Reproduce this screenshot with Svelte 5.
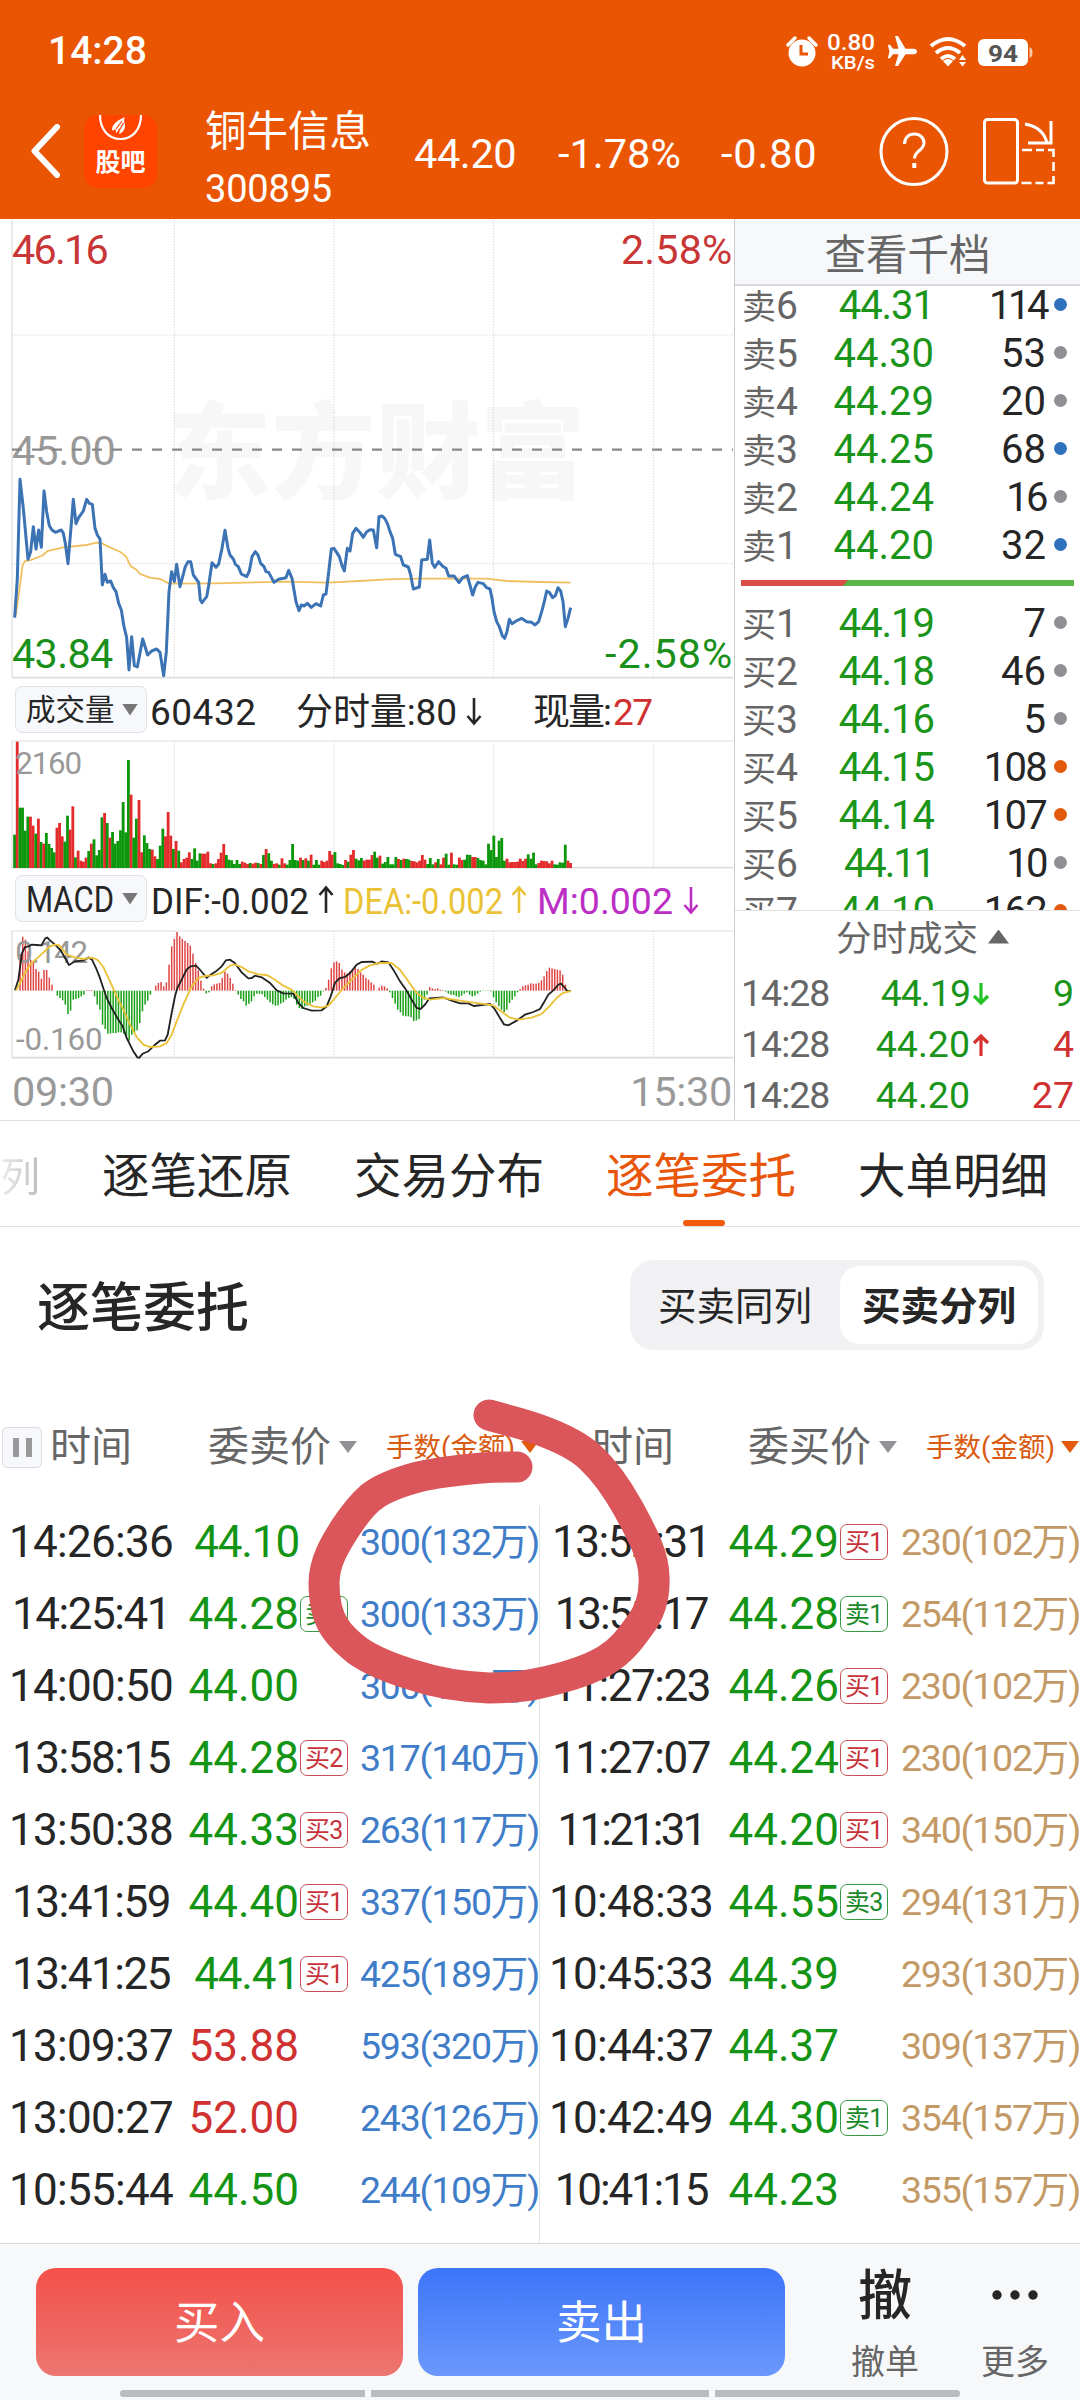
<script lang="ts">
  type Level = { n: number; price: string; vol: number; dot: 'blue' | 'grey' | 'orange' };
  type Order = { time: string; price: string; up?: boolean; tag?: string; amount: string };

  const asks: Level[] = [
    { n: 6, price: '44.31', vol: 114, dot: 'blue' },
    { n: 5, price: '44.30', vol: 53, dot: 'grey' },
    { n: 4, price: '44.29', vol: 20, dot: 'grey' },
    { n: 3, price: '44.25', vol: 68, dot: 'blue' },
    { n: 2, price: '44.24', vol: 16, dot: 'grey' },
    { n: 1, price: '44.20', vol: 32, dot: 'blue' },
  ];

  const bids: Level[] = [
    { n: 1, price: '44.19', vol: 7, dot: 'grey' },
    { n: 2, price: '44.18', vol: 46, dot: 'grey' },
    { n: 3, price: '44.16', vol: 5, dot: 'grey' },
    { n: 4, price: '44.15', vol: 108, dot: 'orange' },
    { n: 5, price: '44.14', vol: 107, dot: 'orange' },
    { n: 6, price: '44.11', vol: 10, dot: 'grey' },
    { n: 7, price: '44.10', vol: 162, dot: 'orange' },
  ];

  const ticks = [
    { time: '14:28', price: '44.19', dir: 'down', vol: 9, buy: false },
    { time: '14:28', price: '44.20', dir: 'up', vol: 4, buy: true },
    { time: '14:28', price: '44.20', dir: '', vol: 27, buy: true },
  ];

  const tabs = ['逐笔还原', '交易分布', '逐笔委托', '大单明细'];
  let activeTab = '逐笔委托';

  const sells: Order[] = [
    { time: '14:26:36', price: '44.10', amount: '300(132万)' },
    { time: '14:25:41', price: '44.28', tag: '卖1', amount: '300(133万)' },
    { time: '14:00:50', price: '44.00', amount: '300(132万)' },
    { time: '13:58:15', price: '44.28', tag: '买2', amount: '317(140万)' },
    { time: '13:50:38', price: '44.33', tag: '买3', amount: '263(117万)' },
    { time: '13:41:59', price: '44.40', tag: '买1', amount: '337(150万)' },
    { time: '13:41:25', price: '44.41', tag: '买1', amount: '425(189万)' },
    { time: '13:09:37', price: '53.88', up: true, amount: '593(320万)' },
    { time: '13:00:27', price: '52.00', up: true, amount: '243(126万)' },
    { time: '10:55:44', price: '44.50', amount: '244(109万)' },
  ];

  const buys: Order[] = [
    { time: '13:52:31', price: '44.29', tag: '买1', amount: '230(102万)' },
    { time: '13:51:17', price: '44.28', tag: '卖1', amount: '254(112万)' },
    { time: '11:27:23', price: '44.26', tag: '买1', amount: '230(102万)' },
    { time: '11:27:07', price: '44.24', tag: '买1', amount: '230(102万)' },
    { time: '11:21:31', price: '44.20', tag: '买1', amount: '340(150万)' },
    { time: '10:48:33', price: '44.55', tag: '卖3', amount: '294(131万)' },
    { time: '10:45:33', price: '44.39', amount: '293(130万)' },
    { time: '10:44:37', price: '44.37', amount: '309(137万)' },
    { time: '10:42:49', price: '44.30', tag: '卖1', amount: '354(157万)' },
    { time: '10:41:15', price: '44.23', amount: '355(157万)' },
  ];

  const sides = [
    { key: 'sell', label: '委卖价', orders: sells },
    { key: 'buy', label: '委买价', orders: buys },
  ];

  // Roboto figures are tabular, pull numbers with narrow 1s together
  function tighten(value: string | number): string {
    const s = String(value);
    const ones = s.split('1').length - 1;
    return `${((-0.13 * ones) / s.length).toFixed(3)}em`;
  }

  // charts are drawn in 1/3 px units, one minute is STEP wide
  const STEP = 7.98;
  const gridX = [523, 1002, 1480, 1960];

  const priceLine =
    '44,1208 52,1090 60,793 70,880 84,1033 92,1010 100,935 108,1002 116,945 124,997 132,828 140,890 148,932 156,945 166,952 184,945 190,955 196,985 204,1046 220,853 228,926 236,908 250,888 260,853 268,865 277,868 285,940 292,960 300,972 307,1110 315,1078 322,1102 332,1098 340,1118 348,1130 356,1165 364,1185 372,1235 380,1268 387,1365 395,1265 403,1352 412,1356 428,1272 443,1320 455,1308 470,1302 480,1312 491,1382 499,1310 507,1130 515,1070 523,1100 530,1048 540,1115 548,1085 556,1055 564,1040 572,1040 580,1080 596,1102 601,1155 606,1163 620,1145 626,1112 636,1043 648,1057 656,1047 666,1000 675,946 684,1000 690,1020 700,1032 706,1048 715,1055 724,1077 740,1085 748,1068 756,1025 766,1010 774,1020 782,1045 792,1055 798,1070 806,1072 822,1102 836,1093 858,1088 866,1066 876,1090 888,1160 897,1187 904,1170 912,1173 922,1165 934,1177 948,1166 962,1173 970,1140 978,1137 985,1080 994,1002 1002,1000 1018,1025 1026,1052 1033,1068 1042,1000 1050,1008 1058,955 1068,940 1082,955 1090,967 1100,950 1110,944 1120,945 1130,998 1137,905 1146,903 1154,910 1162,925 1170,950 1178,970 1186,1018 1202,1025 1210,1050 1225,1056 1232,1080 1240,1122 1258,1116 1265,1035 1282,1033 1289,975 1297,1045 1304,1057 1316,1040 1328,1054 1338,1060 1346,1083 1362,1083 1377,1103 1388,1088 1402,1082 1418,1140 1426,1115 1434,1102 1450,1106 1460,1118 1470,1122 1476,1150 1482,1190 1490,1220 1498,1235 1507,1262 1514,1270 1521,1250 1528,1213 1536,1226 1552,1216 1565,1210 1580,1220 1595,1222 1605,1230 1616,1220 1625,1190 1633,1160 1640,1128 1648,1132 1658,1148 1666,1142 1674,1118 1682,1128 1689,1160 1696,1235 1704,1210 1712,1178';

  const avgLine =
    '48,1200 60,1110 68,1050 75,1038 90,1036 130,1020 142,1008 190,997 260,990 290,983 303,984 330,997 360,1010 378,1025 392,1053 410,1065 420,1077 450,1088 480,1092 507,1106 640,1105 860,1100 980,1103 1080,1098 1160,1093 1260,1091 1460,1091 1520,1098 1620,1101 1712,1103';

  const volumes =
    'g100 r379 g181 g181 g112 g154 r154 r127 g103 r148 g78 r73 g105 g72 g60 g47 r121 r135 r95 g79 g157 r115 r185 g32 r52 r22 r19 r31 g51 r73 g86 g38 g54 g152 r165 g135 r91 g108 g73 g81 g113 g198 g107 g324 r220 g91 g148 r204 r47 g98 g75 g57 r55 r35 g27 g67 g118 r95 r168 r97 g57 r81 g52 r17 r27 r31 r47 g27 g59 g22 g44 r43 r43 r49 r14 g12 r14 r27 r46 r72 g39 g25 g23 g12 g24 g12 r19 r16 r12 g15 r13 r16 g15 r12 g39 r57 g44 g22 r12 r14 g10 r29 r14 g10 g24 g72 g24 g22 r31 g24 r29 g22 r40 g10 g24 g10 r22 r18 r22 r51 r40 g48 g14 g12 g9 r24 g19 r40 r54 g28 g23 g30 r22 r25 r25 r39 g49 g31 r37 g13 g18 g33 g11 g11 g33 r27 g24 r28 g27 g25 r21 r20 r17 r22 r39 r25 g12 g30 g11 r17 g27 r11 r31 g43 g10 r46 g11 g10 r31 r24 g25 g40 g39 r33 r33 g30 g24 g22 g11 g73 g54 g97 g33 g82 g90 g22 r28 r17 r18 r18 r19 r28 r21 r28 g41 g28 g46 g11 r15 r22 r21 r20 r14 r22 g11 g10 g17 g16 g70 r22 r15'
      .split(' ')
      .map((v) => ({ up: v[0] === 'r', h: Number(v.slice(1)) }));

  const volStep = (1716 - 40) / volumes.length;

  // MACD histogram, positive values above the zero line
  const macd = [
    0, 0, 110, 162, 153, 118, 93, 88, 65, 57, 36, 62, 62, 39, 18, 0, -15, -22, -29, -42, -70, -60, -27, -25, -22,
    -17, -12, 2, 2, 2, -17, -42, -57, -102, -115, -129, -129, -127, -127, -125, -125, -129, -137, -150, -132,
    -125, -119, -97, -62, -42, -30, -12, 0, 15, 23, 26, 13, 25, 78, 133, 155, 176, 163, 155, 149, 143, 135, 111,
    83, 61, 30, 6, -8, -5, 13, 19, 21, 23, 38, 57, 51, 38, 21, 2, -12, -25, -32, -45, -39, -32, -17, -9, -9, -11,
    -19, -27, -35, -41, -45, -44, -39, -35, -27, -22, -19, -25, -42, -52, -55, -47, -45, -39, -35, -30, -19, -15,
    -2, 8, 33, 67, 85, 88, 83, 63, 55, 51, 58, 63, 71, 65, 55, 48, 38, 33, 25, 18, 1, 9, 15, 13, 7, -5, -22, -39,
    -57, -65, -75, -77, -77, -80, -91, -89, -85, -52, -27, -12, 11, 7, 5, 7, 3, 2, -3, -9, -12, -13, -17, -19,
    -15, -9, -5, -12, -17, -15, -9, -3, -1, -1, -1, -2, -20, -35, -47, -57, -64, -57, -37, -27, -17, -5, 5, 13,
    16, 18, 22, 21, 21, 23, 31, 43, 59, 69, 67, 65, 63, 61, 48, 18,
  ];

  const difLine =
    '45,932 55,900 66,820 75,802 86,800 95,795 110,796 124,797 136,776 142,774 150,782 165,795 182,812 195,835 207,856 225,845 250,842 266,834 276,840 288,865 298,890 308,920 320,955 335,985 352,1015 368,1040 380,1075 390,1095 400,1115 412,1133 418,1134 428,1122 445,1115 465,1095 480,1083 495,1082 503,1065 515,1000 525,950 532,925 545,900 560,870 572,860 588,858 598,868 608,880 620,894 632,885 648,875 665,860 678,842 690,840 704,850 725,878 745,896 755,895 765,888 785,893 810,910 830,932 850,941 880,942 895,970 910,985 935,993 965,992 980,980 992,950 1005,910 1018,896 1035,892 1050,880 1070,855 1085,847 1118,846 1130,853 1145,845 1165,848 1180,870 1200,905 1218,930 1235,960 1250,985 1262,988 1275,975 1288,956 1330,953 1355,963 1380,971 1405,971 1422,979 1470,973 1482,985 1500,1015 1512,1034 1525,1037 1550,1023 1575,1005 1600,997 1620,988 1632,968 1645,945 1660,932 1675,915 1683,912 1695,925 1702,934 1712,934';

  const deaLine =
    '48,933 60,910 75,880 90,855 120,828 150,800 165,795 178,797 200,825 225,833 250,838 275,834 292,840 310,862 330,905 350,950 370,990 390,1035 410,1072 430,1095 450,1102 480,1100 500,1090 515,1065 530,1025 550,975 575,920 595,895 615,889 640,887 665,880 690,858 705,855 725,862 745,875 775,884 800,886 825,900 850,918 875,930 890,945 910,965 940,980 965,984 985,978 1005,955 1030,925 1055,900 1085,870 1110,857 1140,850 1175,850 1200,870 1225,905 1250,940 1270,955 1290,960 1330,955 1400,966 1480,977 1505,996 1530,1014 1555,1020 1595,1014 1625,1003 1650,978 1670,955 1688,940 1712,934';
</script>

<div class="screen">
  <header class="top">
    <div class="status">
      <span class="clock">14:28</span>
      <svg class="status-icons" viewBox="780 30 260 44" width="260" height="44">
        <circle cx="802" cy="53" r="13.5" fill="#fff" />
        <path d="M788 45l7-7M816 45l-7-7" stroke="#fff" stroke-width="3.5" stroke-linecap="round" />
        <path d="M801 45v9h7" fill="none" stroke="#ea5504" stroke-width="3" />
        <text x="827" y="50" font-size="22" textLength="48" lengthAdjust="spacingAndGlyphs">0.80</text>
        <text x="831" y="69" font-size="19" textLength="44" lengthAdjust="spacingAndGlyphs">KB/s</text>
        <path d="M917 51.500c0-1.800-1.500-2.800-3-2.800h-8.500L898 36h-3l3.500 12.700h-5.500l-3-4h-2.200l1.700 6.800-1.700 6.800h2.200l3-4h5.500L895 66h3l7.500-11.700h8.500c1.500 0 3-1 3-2.800z" fill="#fff" />
        <g fill="none" stroke="#fff" stroke-width="4">
          <path d="M931 46q17-14 34 0" />
          <path d="M936 53q12-10 24 0" />
          <path d="M941 59q7-6 14 0" />
        </g>
        <path d="M943 61q5-4 10 0l-5 5.500z" fill="#fff" />
        <path d="M959 60l3.500-5 3.500 5zM959 62h7l-3.500 4.500z" fill="#fff" />
        <rect x="978" y="39" width="50" height="27" rx="6" fill="#fff" />
        <path d="M1029.500 47q3 1 3 5.500t-3 5.500z" fill="#fbc9a8" />
        <text x="988" y="62" font-size="24" font-weight="700" class="batt" textLength="30" lengthAdjust="spacingAndGlyphs">94</text>
      </svg>
    </div>
    <div class="nav">
      <svg class="back" viewBox="0 0 32 54" width="32" height="54">
        <path d="M27 3L4.500 27 27 51" fill="none" stroke="#fff" stroke-width="6" stroke-linecap="round" stroke-linejoin="round" />
      </svg>
      <div class="guba">
        <svg viewBox="0 0 73 30" width="73" height="30">
          <path d="M16 0c0 14 8 24 20.500 24S57 14 57 0" fill="none" stroke="#fff" stroke-width="2.200" />
          <path d="M28 15c0-6 6-10 13-13-2 3 0 6 0 9 0 4-3 7-6 8 1-3 1-5 0-6-1 2-1 4-3 5 0-2 0-3-1-4-1 1-1 2-3 1z" fill="#fff" />
          <path d="M32 14l6-8M35.500 15l4-7" stroke="#ff4400" stroke-width="1.200" />
        </svg>
        <span>股吧</span>
      </div>
      <div class="stock">
        <div class="stock-name">铜牛信息</div>
        <div class="stock-code">300895</div>
      </div>
      <div class="quote">
        <span class="q1">44.20</span><span class="q2">-1.78%</span><span class="q3">-0.80</span>
      </div>
      <svg class="nav-icons" viewBox="876 112 184 78" width="184" height="78" fill="none" stroke="#fff" stroke-width="3">
        <circle cx="913" cy="151.500" r="33" />
        <path d="M903.500 144c0-6 4-10 9.800-10s9.700 3.800 9.700 9c0 7.500-9.500 7.500-9.500 15.500" />
        <path d="M911.300 163h4v5h-4z" fill="#fff" stroke="none" />
        <rect x="983.500" y="119.500" width="33" height="63.500" rx="3" />
        <path d="M1024 124q18 3 22 19" />
        <path d="M1050 121v22h-23" />
        <path d="M1021 150h10m4 0h8m4 0h5.500v7m0 5v9m0 5v7h-6m-4 0h-8m-4 0h-10" stroke-width="2.600" />
      </svg>
    </div>
  </header>

  <section class="market">
    <div class="charts">
      <svg class="price-chart" viewBox="0 12 2205 1386" width="735" height="462">
        <text x="500" y="824" class="watermark">东方财富</text>
        <g class="dots">
          {#each gridX as x}
            <line x1={x} y1="15" x2={x} y2="1388" />
          {/each}
          <line x1="36" y1="360" x2="2199" y2="360" />
          <line x1="36" y1="1046" x2="2199" y2="1046" />
        </g>
        <path d="M36 15V1388" class="frame" />
        <path d="M36 1388H2199" class="frame thick" />
        <text x="36" y="147" class="lbl red" textLength="290">46.16</text>
        <text x="36" y="750" class="lbl grey" textLength="311">45.00</text>
        <text x="36" y="1360" class="lbl green" textLength="304">43.84</text>
        <text x="1863" y="147" class="lbl red" textLength="334">2.58%</text>
        <text x="1815" y="1360" class="lbl green" textLength="382">-2.58%</text>
        <path d="M36 704H2199" stroke="#888" stroke-width="7" stroke-dasharray="30 30" />
        <polyline points={avgLine} fill="none" stroke="#f0c060" stroke-width="5.500" />
        <polyline points={priceLine} fill="none" stroke="#3b73b5" stroke-width="9" stroke-linejoin="round" />
      </svg>

      <div class="indicator">
        <span class="picker">成交量<i class="caret"></i></span>
        <svg viewBox="147 681 588 60" width="588" height="60" class="ind">
          <text x="150" y="725" textLength="106">60432</text>
          <text x="296" y="725" textLength="161">分时量:80</text>
          <path d="M474 698v25m-6.500-7l6.500 7.500 6.500-7.500" />
          <text x="533" y="725" textLength="79">现量:</text>
          <text x="613" y="725" class="red" textLength="40">27</text>
        </svg>
      </div>

      <svg class="vol-chart" viewBox="0 181 2205 390" width="735" height="130">
        <g class="dots">
          {#each gridX as x}
            <line x1={x} y1="184" x2={x} y2="564" />
          {/each}
        </g>
        <path d="M36 564V184H2199" class="frame" />
        <path d="M36 564H2199" class="frame thick" />
        {#each volumes as v, i}
          <rect x={40 + i * volStep - 0.5} y={565 - v.h} width={volStep + 0.5} height={v.h} fill={v.up ? '#e32b2b' : '#0b960b'} />
        {/each}
        <text x="46" y="282" class="lbl small grey" textLength="200">2160</text>
      </svg>

      <div class="indicator macd">
        <span class="picker"><svg viewBox="0 0 88 40" width="88" height="40" class="ind"><text x="0" y="33" textLength="88" lengthAdjust="spacingAndGlyphs">MACD</text></svg><i class="caret"></i></span>
        <svg viewBox="147 870 588 60" width="588" height="60" class="ind">
          <text x="151" y="914" textLength="158" lengthAdjust="spacingAndGlyphs">DIF:-0.002</text>
          <path d="M326 913v-25m-6.500 7l6.500-7.500 6.500 7.500" />
          <text x="343" y="914" class="yellow" textLength="160" lengthAdjust="spacingAndGlyphs">DEA:-0.002</text>
          <path d="M519 913v-25m-6.500 7l6.500-7.500 6.500 7.500" class="yellow" />
          <text x="537" y="914" class="purple" textLength="136" lengthAdjust="spacingAndGlyphs">M:0.002</text>
          <path d="M691 887v25m-6.500-7l6.500 7.500 6.500-7.500" class="purple" />
        </svg>
      </div>

      <svg class="macd-chart" viewBox="0 751 2205 390" width="735" height="130">
        <g class="dots">
          {#each gridX as x}
            <line x1={x} y1="754" x2={x} y2="1134" />
          {/each}
        </g>
        <path d="M36 1134V754H2199" class="frame" />
        <path d="M36 1134H2199" class="frame thick" />
        {#each macd as m, i}
          <rect x={42 + i * STEP} y={m > 0 ? 933 - m : 933} width="4.500" height={Math.abs(m)} fill={m > 0 ? '#e04545' : '#18a018'} />
        {/each}
        <text x="46" y="851" class="lbl small grey" textLength="218">0.142</text>
        <text x="48" y="1112" class="lbl small grey" textLength="260">-0.160</text>
        <polyline points={difLine} fill="none" stroke="#222" stroke-width="5.500" />
        <polyline points={deaLine} fill="none" stroke="#eac236" stroke-width="5.500" />
      </svg>

      <div class="time-axis"><span>09:30</span><span>15:30</span></div>
    </div>

    <aside class="book">
      <div class="book-head">查看千档</div>
      <div class="levels">
        {#each asks as l}
          <div class="level">
            <span class="side">卖<b>{l.n}</b></span>
            <span class="price" style="letter-spacing: {tighten(l.price)}">{l.price}</span>
            <span class="vol" style="letter-spacing: {tighten(l.vol)}">{l.vol}</span>
            <i class="dot {l.dot}"></i>
          </div>
        {/each}
        <div class="ratio"><i class="ratio-buy"></i></div>
        {#each bids as l}
          <div class="level">
            <span class="side">买<b>{l.n}</b></span>
            <span class="price" style="letter-spacing: {tighten(l.price)}">{l.price}</span>
            <span class="vol" style="letter-spacing: {tighten(l.vol)}">{l.vol}</span>
            <i class="dot {l.dot}"></i>
          </div>
        {/each}
      </div>
      <div class="ticks-head">分时成交<i></i></div>
      {#each ticks as t}
        <div class="tick">
          <span class="tick-time">{t.time}</span>
          <span class="tick-price" style="letter-spacing: {tighten(t.price)}">{t.price}</span>
          <svg viewBox="0 0 20 26" width="20" height="26" class={t.dir}>
            {#if t.dir === 'down'}
              <path d="M10 2v20M3 15l7 7 7-7" />
            {:else if t.dir === 'up'}
              <path d="M10 24V4M3 11l7-7 7 7" />
            {/if}
          </svg>
          <span class="tick-vol" class:buy={t.buy}>{t.vol}</span>
        </div>
      {/each}
    </aside>
  </section>

  <nav class="tabs">
    <span class="cut">列</span>
    {#each tabs as tab}
      <button class:active={tab === activeTab} on:click={() => (activeTab = tab)}>{tab}</button>
    {/each}
  </nav>

  <div class="panel-title">
    <h2>逐笔委托</h2>
    <div class="segment">
      <span>买卖同列</span>
      <span class="on">买卖分列</span>
    </div>
  </div>

  <section class="orders">
    {#each sides as side}
      <div class="half {side.key}">
        <div class="cols">
          <span class="pause">{#if side.key === 'sell'}<i></i>{/if}</span>
          <span class="col-time">时间</span>
          <span class="col-price">{side.label}</span><i class="caret"></i>
          <span class="col-amount">手数(金额)</span><i class="caret hot"></i>
        </div>
        <div class="rows">
          {#each side.orders as o}
            <div class="order">
              <span class="o-time" style="letter-spacing: {tighten(o.time)}">{o.time}</span>
              <span class="o-price" class:up={o.up} style="letter-spacing: {tighten(o.price)}">{o.price}</span>
              <span class="o-tag">
                {#if o.tag}<em class:bid={o.tag[0] === '买'}>{o.tag}</em>{/if}
              </span>
              <span class="o-amount">{o.amount}</span>
            </div>
          {/each}
        </div>
      </div>
    {/each}
    <svg class="marker" viewBox="290 1390 390 330" width="390" height="330">
      <path d="M489 1415C510 1421 524 1424 540 1430C562 1438 578 1446 590 1457C606 1472 618 1490 628 1508C641 1532 654 1555 654 1577C655 1597 650 1612 640 1625C630 1639 621 1651 606 1660C588 1671 563 1678 540 1683C523 1687 507 1688 489 1688C463 1687 437 1683 413 1675C393 1669 374 1662 358 1651C349 1644 341 1637 335 1628C327 1616 324 1600 324 1583C324 1562 335 1544 346 1527C354 1515 361 1506 370 1498C382 1488 399 1482 418 1477C439 1472 461 1470 482 1468C494 1467 505 1467 517 1467" />
    </svg>
  </section>

  <footer class="actions">
    <div class="action-row">
      <button class="buy-btn">买入</button>
      <button class="sell-btn">卖出</button>
      <div class="mini cancel"><strong>撤</strong><span>撤单</span></div>
      <div class="mini more">
        <svg viewBox="0 0 50 54" width="50" height="54">
          <circle cx="7" cy="27" r="4.700" /><circle cx="25" cy="27" r="4.700" /><circle cx="43" cy="27" r="4.700" />
        </svg>
        <span>更多</span>
      </div>
    </div>
    <div class="home-bar"><i></i><i></i><i></i></div>
  </footer>
</div>

<style>
  :global(body) {
    margin: 0;
    background: #fff;
  }

  .screen {
    width: 1080px;
    height: 2400px;
    display: flex;
    flex-direction: column;
    overflow: hidden;
    background: #fff;
    color: #262626;
    font-family: Roboto, 'Noto Sans CJK SC', sans-serif;
  }

  .screen * {
    box-sizing: border-box;
  }

  i,
  em {
    font-style: normal;
  }

  button {
    border: 0;
    padding: 0;
    background: none;
    font-family: inherit;
    color: inherit;
  }

  svg {
    display: block;
    flex: none;
  }

  svg text {
    font-family: Roboto, 'Noto Sans CJK SC', sans-serif;
  }

  .red {
    fill: #c93636;
  }
  .green {
    fill: #1a901a;
  }
  .grey {
    fill: #999;
  }

  /* header */
  .top {
    flex: none;
    height: 219px;
    background: #ea5504;
    color: #fff;
  }

  .status {
    display: flex;
    height: 80px;
    padding: 30px 40px 0 48px;
    justify-content: space-between;
  }

  .clock {
    font-size: 39px;
    font-weight: 500;
    line-height: 42px;
  }

  .status-icons text {
    fill: #fff;
    font-weight: 500;
  }

  .status-icons .batt {
    fill: #555;
    font-weight: 700;
  }

  .nav {
    display: flex;
    align-items: flex-start;
    height: 138px;
    padding-left: 30px;
  }

  .back {
    margin: 44px 22px 0 0;
  }

  .guba {
    width: 73px;
    height: 73px;
    margin: 35px 48px 0 0;
    border-radius: 14px;
    background: #ff4400;
    text-align: center;
  }

  .guba span {
    display: block;
    margin-top: 1px;
    font-size: 25px;
    font-weight: 700;
    line-height: 34px;
  }

  .stock {
    width: 208px;
    padding-top: 24px;
  }

  .stock-name {
    font-size: 41.500px;
    line-height: 56px;
  }

  .stock-code {
    font-size: 38px;
    line-height: 58px;
    letter-spacing: -0.200px;
  }

  .quote {
    width: 466px;
    padding-top: 49px;
    font-size: 41.500px;
    line-height: 50px;
    display: flex;
  }

  .q1 {
    width: 145px;
    padding-left: 1px;
    letter-spacing: -0.400px;
  }
  .q2 {
    width: 163px;
  }
  .q3 {
    letter-spacing: 0.800px;
  }

  .nav-icons {
    margin-top: 32px;
    margin-left: -2px;
  }

  /* chart column */
  .market {
    display: flex;
    flex: none;
    height: 902px;
    border-bottom: 1px solid #ddd;
  }

  .charts {
    width: 735px;
    border-right: 1px solid #ccc;
  }

  .watermark {
    font-size: 314px;
    font-weight: 900;
    fill: #f7f7f7;
  }

  .dots line {
    stroke: #ccc;
    stroke-width: 3;
    stroke-dasharray: 3 5;
  }

  .frame {
    fill: none;
    stroke: #ddd;
    stroke-width: 3.500;
  }

  .frame.thick {
    stroke-width: 5;
  }

  .lbl {
    font-size: 124px;
  }

  .lbl.small {
    font-size: 94px;
  }

  .indicator {
    display: flex;
    height: 59px;
    padding-left: 15px;
  }

  .picker {
    display: flex;
    align-items: center;
    justify-content: space-between;
    flex: none;
    width: 132px;
    height: 47px;
    margin-top: 5px;
    padding: 0 8px 0 10px;
    border: 1px solid #e0e2e8;
    border-radius: 7px;
    background: #f6f8fb;
    font-size: 29.500px;
    line-height: 42px;
  }

  .picker svg {
    overflow: visible;
  }

  .indicator.macd {
    height: 60px;
  }

  .caret {
    width: 16px;
    height: 12px;
    background: #777;
    clip-path: polygon(0 0, 100% 0, 50% 100%);
  }

  .ind text {
    font-size: 37px;
    fill: #262626;
  }

  .ind path {
    fill: none;
    stroke: #262626;
    stroke-width: 2.600;
  }

  .ind text.red {
    fill: #cf3030;
  }
  .ind text.yellow {
    fill: #eac236;
  }
  .ind path.yellow {
    stroke: #eac236;
  }
  .ind text.purple {
    fill: #bb2fc4;
  }
  .ind path.purple {
    stroke: #bb2fc4;
  }

  .time-axis {
    display: flex;
    justify-content: space-between;
    padding: 2px 2px 0 12px;
    font-size: 41.500px;
    line-height: 60px;
    letter-spacing: -0.300px;
    color: #999;
  }

  /* order book */
  .book {
    width: 345px;
  }

  .book-head {
    height: 67px;
    border-bottom: 2px solid #d8dadd;
    background: #f6f8fa;
    color: #666;
    font-size: 41.500px;
    line-height: 74px;
    text-align: center;
  }

  .levels {
    height: 625px;
    padding-left: 6px;
    overflow: hidden;
    border-bottom: 1px solid #e2e2e2;
  }

  .level {
    position: relative;
    top: -4px;
    display: flex;
    align-items: center;
    height: 48px;
    font-size: 40px;
    line-height: 50px;
  }

  .side {
    width: 70px;
    padding-left: 1px;
    color: #666;
    font-size: 34px;
  }

  .side b {
    font-weight: 400;
    font-size: 39px;
  }

  .price {
    width: 123px;
    color: #1a951a;
    text-align: right;
  }

  .vol {
    width: 112px;
    text-align: right;
  }

  .dot {
    width: 13px;
    height: 13px;
    margin: -4px 0 0 8px;
    border-radius: 50%;
    background: #8f8f94;
  }

  .dot.blue {
    background: #2f71bd;
  }
  .dot.orange {
    background: #e35a0c;
  }

  .ratio {
    width: 333px;
    height: 6px;
    margin: 6px 0 18px;
    background: #5bb648;
  }

  .ratio-buy {
    display: block;
    width: 107px;
    height: 6px;
    background: #db4d49;
    clip-path: polygon(0 0, 100% 0, 95% 100%, 0 100%);
  }

  .ticks-head {
    display: flex;
    align-items: center;
    height: 57px;
    padding-left: 101px;
    color: #666;
    font-size: 35.500px;
    line-height: 61px;
  }

  .ticks-head i {
    width: 21px;
    height: 14px;
    margin: -6px 0 0 10px;
    background: #666;
    clip-path: polygon(50% 0, 100% 100%, 0 100%);
  }

  .tick {
    display: flex;
    align-items: center;
    height: 51.200px;
    padding-left: 6px;
    font-size: 37.500px;
    line-height: 53px;
  }

  .tick-time {
    width: 95px;
    color: #666;
    letter-spacing: -1px;
  }

  .tick-price {
    width: 134px;
    text-align: right;
    color: #1a951a;
  }

  .tick svg {
    margin-left: 1px;
    fill: none;
    stroke: #22c322;
    stroke-width: 3.200;
  }

  .tick svg.up {
    stroke: #d93030;
  }

  .tick-vol {
    width: 83px;
    text-align: right;
    color: #1a951a;
  }

  .tick-vol.buy {
    color: #cf3030;
  }

  /* tabs */
  .tabs {
    display: flex;
    flex: none;
    height: 106px;
    border-bottom: 1px solid #e0e0e0;
    font-size: 47.500px;
    line-height: 113px;
  }

  .cut {
    flex: none;
    width: 102px;
    font-size: 40px;
    background: linear-gradient(90deg, #eee 0, #bbb 40px);
    background-clip: text;
    -webkit-background-clip: text;
    color: transparent;
  }

  .tabs button {
    position: relative;
    width: 190px;
    margin-right: 62px;
    flex: none;
    font-size: 47.500px;
    line-height: 113px;
    height: 105px;
    white-space: nowrap;
  }

  .tabs .active {
    color: #e8560c;
  }

  .tabs .active::after {
    content: '';
    position: absolute;
    left: 77px;
    bottom: 0;
    width: 42px;
    height: 6px;
    border-radius: 3px;
    background: #f35b0c;
  }

  .panel-title {
    display: flex;
    flex: none;
    justify-content: space-between;
    height: 180px;
    padding: 33px 36px 0 37px;
  }

  h2 {
    margin: 0;
    font-size: 53px;
    font-weight: 500;
    line-height: 99px;
  }

  .segment {
    display: flex;
    width: 414px;
    height: 90px;
    padding: 6px;
    border-radius: 24px;
    background: #f1f1f4;
    font-size: 38.500px;
    line-height: 81px;
  }

  .segment span {
    width: 204px;
    padding-left: 22px;
  }

  .segment .on {
    width: 198px;
    padding: 0;
    border-radius: 20px;
    background: #fff;
    font-weight: 700;
    text-align: center;
  }

  /* order table */
  .orders {
    position: relative;
    display: flex;
    flex: none;
    height: 836px;
  }

  .half {
    width: 540px;
  }

  .cols {
    display: flex;
    align-items: center;
    height: 99px;
    padding: 0 0 19px 2px;
    color: #666;
    font-size: 41px;
    line-height: 63px;
  }

  .pause {
    flex: none;
    width: 40px;
    height: 41px;
    margin-right: 8px;
  }

  .sell .pause {
    display: flex;
    align-items: center;
    justify-content: center;
    border: 1px solid #d9dbe0;
    border-radius: 5px;
    background: #f6f8fb;
  }

  .pause i {
    width: 19px;
    height: 19px;
    border: solid #999;
    border-width: 0 6px;
  }

  .col-time {
    width: 158px;
  }

  .buy .col-time {
    padding-left: 2px;
  }

  .col-price {
    width: 125px;
  }

  .cols .caret {
    width: 18px;
    margin: 0 29px 0 6px;
    background: #919197;
    flex: none;
  }

  .col-amount {
    width: 133px;
    flex: none;
    color: #d95a10;
    font-size: 27.500px;
    white-space: nowrap;
  }

  .cols .caret.hot {
    margin: 0 0 0 2px;
    background: #e35a0c;
  }

  .rows {
    height: 737px;
    border-right: 1px solid #e2e4e8;
  }

  .buy .rows {
    border: 0;
  }

  .order {
    display: flex;
    align-items: center;
    height: 72px;
    font-size: 44px;
    line-height: 74px;
  }

  .o-time {
    width: 182px;
    text-align: center;
    white-space: nowrap;
  }

  .o-price {
    width: 117px;
    color: #149414;
    text-align: right;
  }

  .o-price.up {
    color: #cf3030;
  }

  .o-tag {
    width: 51px;
    display: flex;
    padding-left: 1px;
  }

  .o-tag em {
    height: 36px;
    padding: 0 5px 0 4px;
    border: 1px solid #3a9a45;
    border-radius: 7px;
    color: #1a8a2c;
    font-size: 25px;
    line-height: 36px;
    letter-spacing: -0.800px;
  }

  .o-tag em.bid {
    border-color: #c65056;
    color: #c8323a;
  }

  .o-amount {
    flex: 1;
    color: #3f7dc8;
    font-size: 37.500px;
    letter-spacing: -1.200px;
    text-align: right;
    white-space: nowrap;
  }

  .buy .o-amount {
    color: #c39a66;
  }

  .marker {
    position: absolute;
    left: 290px;
    top: -17px;
    fill: none;
    stroke: #da565a;
    stroke-width: 31;
    stroke-linecap: round;
    stroke-linejoin: round;
  }

  /* bottom bar */
  .actions {
    flex: none;
    height: 157px;
    border-top: 1px solid #d5d9da;
    background: #f7f8fa;
  }

  .action-row {
    display: flex;
    height: 146px;
    padding: 24px 0 0 36px;
  }

  .buy-btn,
  .sell-btn {
    width: 367px;
    height: 108px;
    margin-right: 15px;
    border-radius: 20px;
    background: linear-gradient(#f4504a, #ec7670);
    color: #fff;
    font-size: 45.500px;
    line-height: 111px;
  }

  .sell-btn {
    background: linear-gradient(#3c75f9, #6c98fd);
  }

  .mini {
    display: flex;
    flex-direction: column;
    align-items: center;
    width: 130px;
  }

  .mini.cancel {
    margin-left: 20px;
  }

  .mini strong {
    font-size: 54px;
    font-weight: 500;
    line-height: 58px;
  }

  .mini span {
    font-size: 34px;
    line-height: 40px;
    margin-top: 16px;
    color: #666;
  }

  .mini svg {
    margin-bottom: 4px;
    fill: #262626;
  }

  .home-bar {
    display: flex;
    gap: 6px;
    width: 840px;
    height: 7px;
    margin: 0 auto;
    border-radius: 4px;
    overflow: hidden;
  }

  .home-bar i {
    width: 245px;
    background: #babcbe;
  }

  .home-bar i:nth-child(2) {
    width: 338px;
  }
</style>
